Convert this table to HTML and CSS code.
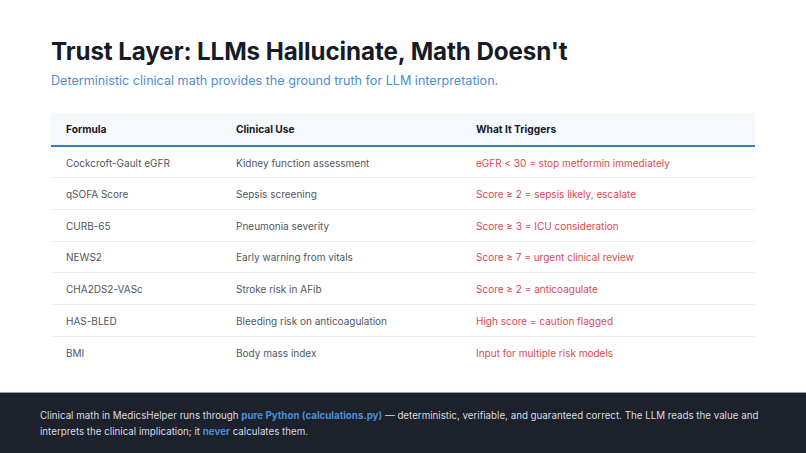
FILE: index.html
```html
<!DOCTYPE html>
<html>
<head>
<meta charset="utf-8">
<link rel="stylesheet" href="styles.css">
</head>
<body>
<div class="slide">
  <main class="content">
    <h1 class="title">Trust Layer: LLMs Hallucinate, Math Doesn't</h1>
    <p class="subtitle">Deterministic clinical math provides the ground truth for LLM interpretation.</p>
    <table class="grid">
      <thead>
        <tr><th class="c1">Formula</th><th class="c2">Clinical Use</th><th class="c3">What It Triggers</th></tr>
      </thead>
      <tbody>
        <tr><td>Cockcroft-Gault eGFR</td><td>Kidney function assessment</td><td class="trig">eGFR &lt; 30 = stop metformin immediately</td></tr>
        <tr><td>qSOFA Score</td><td>Sepsis screening</td><td class="trig">Score ≥ 2 = sepsis likely, escalate</td></tr>
        <tr><td>CURB-65</td><td>Pneumonia severity</td><td class="trig">Score ≥ 3 = ICU consideration</td></tr>
        <tr><td>NEWS2</td><td>Early warning from vitals</td><td class="trig">Score ≥ 7 = urgent clinical review</td></tr>
        <tr><td>CHA2DS2-VASc</td><td>Stroke risk in AFib</td><td class="trig">Score ≥ 2 = anticoagulate</td></tr>
        <tr><td>HAS-BLED</td><td>Bleeding risk on anticoagulation</td><td class="trig">High score = caution flagged</td></tr>
        <tr class="last"><td>BMI</td><td>Body mass index</td><td class="trig">Input for multiple risk models</td></tr>
      </tbody>
    </table>
  </main>
  <footer class="footer">
    <p>Clinical math in MedicsHelper runs through <strong>pure Python (calculations.py)</strong> — deterministic, verifiable, and guaranteed correct. The LLM reads the value and interprets the clinical implication; it <strong>never</strong> calculates them.</p>
  </footer>
</div>
</body>
</html>
```
FILE: styles.css
```css
* { box-sizing: border-box; }
html, body { margin: 0; padding: 0; }
body {
  width: 806px;
  height: 453px;
  overflow: hidden;
  background: #ffffff;
  font-family: "Inter", "Liberation Sans", sans-serif;
}
.slide {
  width: 806px;
  height: 453px;
  display: flex;
  flex-direction: column;
}
.content {
  flex: 1;
  padding: 38px 51px 0 51px;
}
.title {
  margin: 0;
  font-size: 24.2px;
  line-height: 28px;
  font-weight: 700;
  color: #161b26;
  letter-spacing: -0.1px;
}
.subtitle {
  margin: 6px 0 0 0;
  font-size: 12.6px;
  line-height: 18px;
  color: #4a8ed6;
}
.grid {
  margin-top: 23px;
  width: 704px;
  border-collapse: collapse;
  font-size: 10px;
}
.grid th {
  background: #f5f8fc;
  text-align: left;
  font-weight: 700;
  color: #161b26;
  height: 33px;
  padding: 0 15px;
  border-bottom: 2px solid #3b78c2;
  font-size: 10.2px;
}
.grid th.c1 { width: 170px; }
.grid th.c2 { width: 240px; }
.grid td {
  height: 31.7px;
  padding: 1px 15px 0 15px;
  color: #505662;
  border-bottom: 1px solid #eceef2;
}
.grid tr.last td { border-bottom: none; }
.grid td.trig { color: #e0474f; }
.footer {
  height: 61px;
  background: #1c212c;
  border-top: 1px solid #9aa0a8;
  padding: 15px 30px 0 40px;
}
.footer p {
  margin: 0;
  font-size: 9.75px;
  line-height: 16px;
  color: #d9dce2;
}
.footer strong {
  color: #4a8ed6;
  font-weight: 700;
}
```
